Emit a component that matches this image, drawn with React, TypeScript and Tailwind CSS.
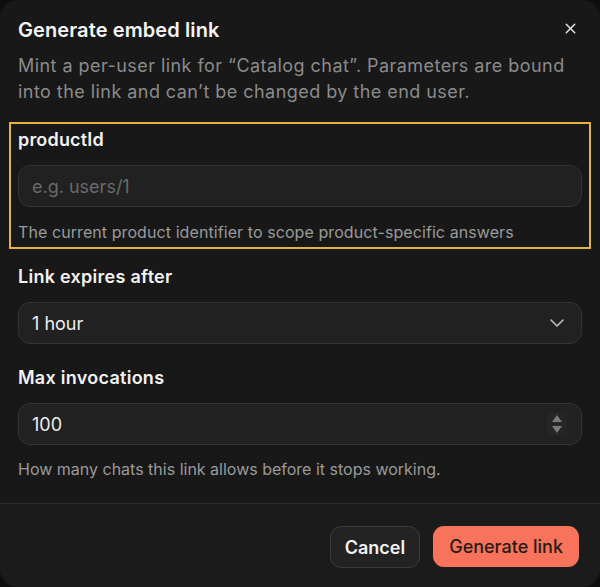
import { X } from "lucide-react";

export default function App() {
  return (
    <div className="h-[587px] w-[600px] bg-[#0e0e0e] font-['Inter','Noto_Sans',sans-serif]">
      <div className="flex h-full flex-col rounded-[18px] bg-[#181818]">
        {/* Header */}
        <div className="relative px-[18px] pt-[16px]">
          <h2 className="text-[20px] font-semibold leading-[28px] tracking-[0.005em] text-[#f5f5f5]">
            Generate embed link
          </h2>
          <button className="absolute right-[21px] top-[20px] text-[#e8e8e8]">
            <X className="h-[17px] w-[17px]" strokeWidth={2} />
          </button>
          <p className="mt-[9px] text-[18px] leading-[26px] tracking-[0.025em] text-[#8b8b8b]">
            Mint a per-user link for “Catalog chat”. Parameters are bound into the link and can’t be changed by the end user.
          </p>
        </div>

        {/* Fields */}
        <div className="mt-[17px] px-[9px]">
          <div className="border-2 border-[#e4b43e] px-[7px] pb-[4px] pt-[4px]">
            <label className="block text-[18px] font-semibold leading-[24px] tracking-[0.01em] text-[#f2f2f2]">productId</label>
            <input
              type="text"
              placeholder="e.g. users/1"
              className="mt-[13px] h-[42px] w-full rounded-[12px] border border-[#333] bg-[#212121] px-[13px] text-[18px] text-[#eee] placeholder:text-[#6a6a6a] focus:outline-none"
            />
            <p className="mt-[14px] text-[16px] leading-[22px] tracking-[0.005em] text-[#9a9a9a]">
              The current product identifier to scope product-specific answers
            </p>
          </div>
        </div>

        <div className="mt-[16px] px-[18px]">
          <label className="block text-[18px] font-semibold leading-[24px] tracking-[0.015em] text-[#f2f2f2]">Link expires after</label>
          <div className="mt-[13px] flex h-[42px] items-center justify-between rounded-[12px] border border-[#333] bg-[#212121] pl-[13px] pr-[15px]">
            <span className="text-[18px] text-[#eee]">1 hour</span>
            <svg width="14" height="8" viewBox="0 0 14 8" fill="none" className="mr-[2px]">
              <path d="M1 1l6 6 6-6" stroke="#bdbdbd" strokeWidth="1.6" strokeLinecap="round" strokeLinejoin="round" />
            </svg>
          </div>

          <label className="mt-[22px] block text-[18px] font-semibold leading-[24px] tracking-[0.015em] text-[#f2f2f2]">Max invocations</label>
          <div className="mt-[13px] flex h-[42px] items-center justify-between rounded-[12px] border border-[#333] bg-[#212121] pl-[13px] pr-[14px]">
            <span className="text-[18px] text-[#eee]">100</span>
            <div className="flex h-[22px] w-[20px] flex-col items-center justify-center gap-[4px] bg-[#262626]">
              <svg width="10" height="7" viewBox="0 0 10 7">
                <path d="M5 0L10 7H0Z" fill="#7a7a7a" />
              </svg>
              <svg width="10" height="7" viewBox="0 0 10 7">
                <path d="M0 0H10L5 7Z" fill="#7a7a7a" />
              </svg>
            </div>
          </div>
          <p className="mt-[13px] text-[16px] leading-[22px] text-[#9a9a9a]">
            How many chats this link allows before it stops working.
          </p>
        </div>

        {/* Footer */}
        <div className="mt-[23px] flex flex-1 items-start justify-end gap-[13px] rounded-b-[18px] border-t border-[#2a2a2a] bg-[#1b1b1b] px-[21px] pt-[22px]">
          <button className="h-[42px] rounded-[11px] border border-[#3a3a3a] bg-[#232323] px-[14px] text-[18px] font-semibold text-[#f2f2f2]">
            Cancel
          </button>
          <button className="h-[41px] rounded-[11px] bg-[#f7735b] px-[16px] text-[18px] font-medium text-[#2a1a16]">
            Generate link
          </button>
        </div>
      </div>
    </div>
  );
}
